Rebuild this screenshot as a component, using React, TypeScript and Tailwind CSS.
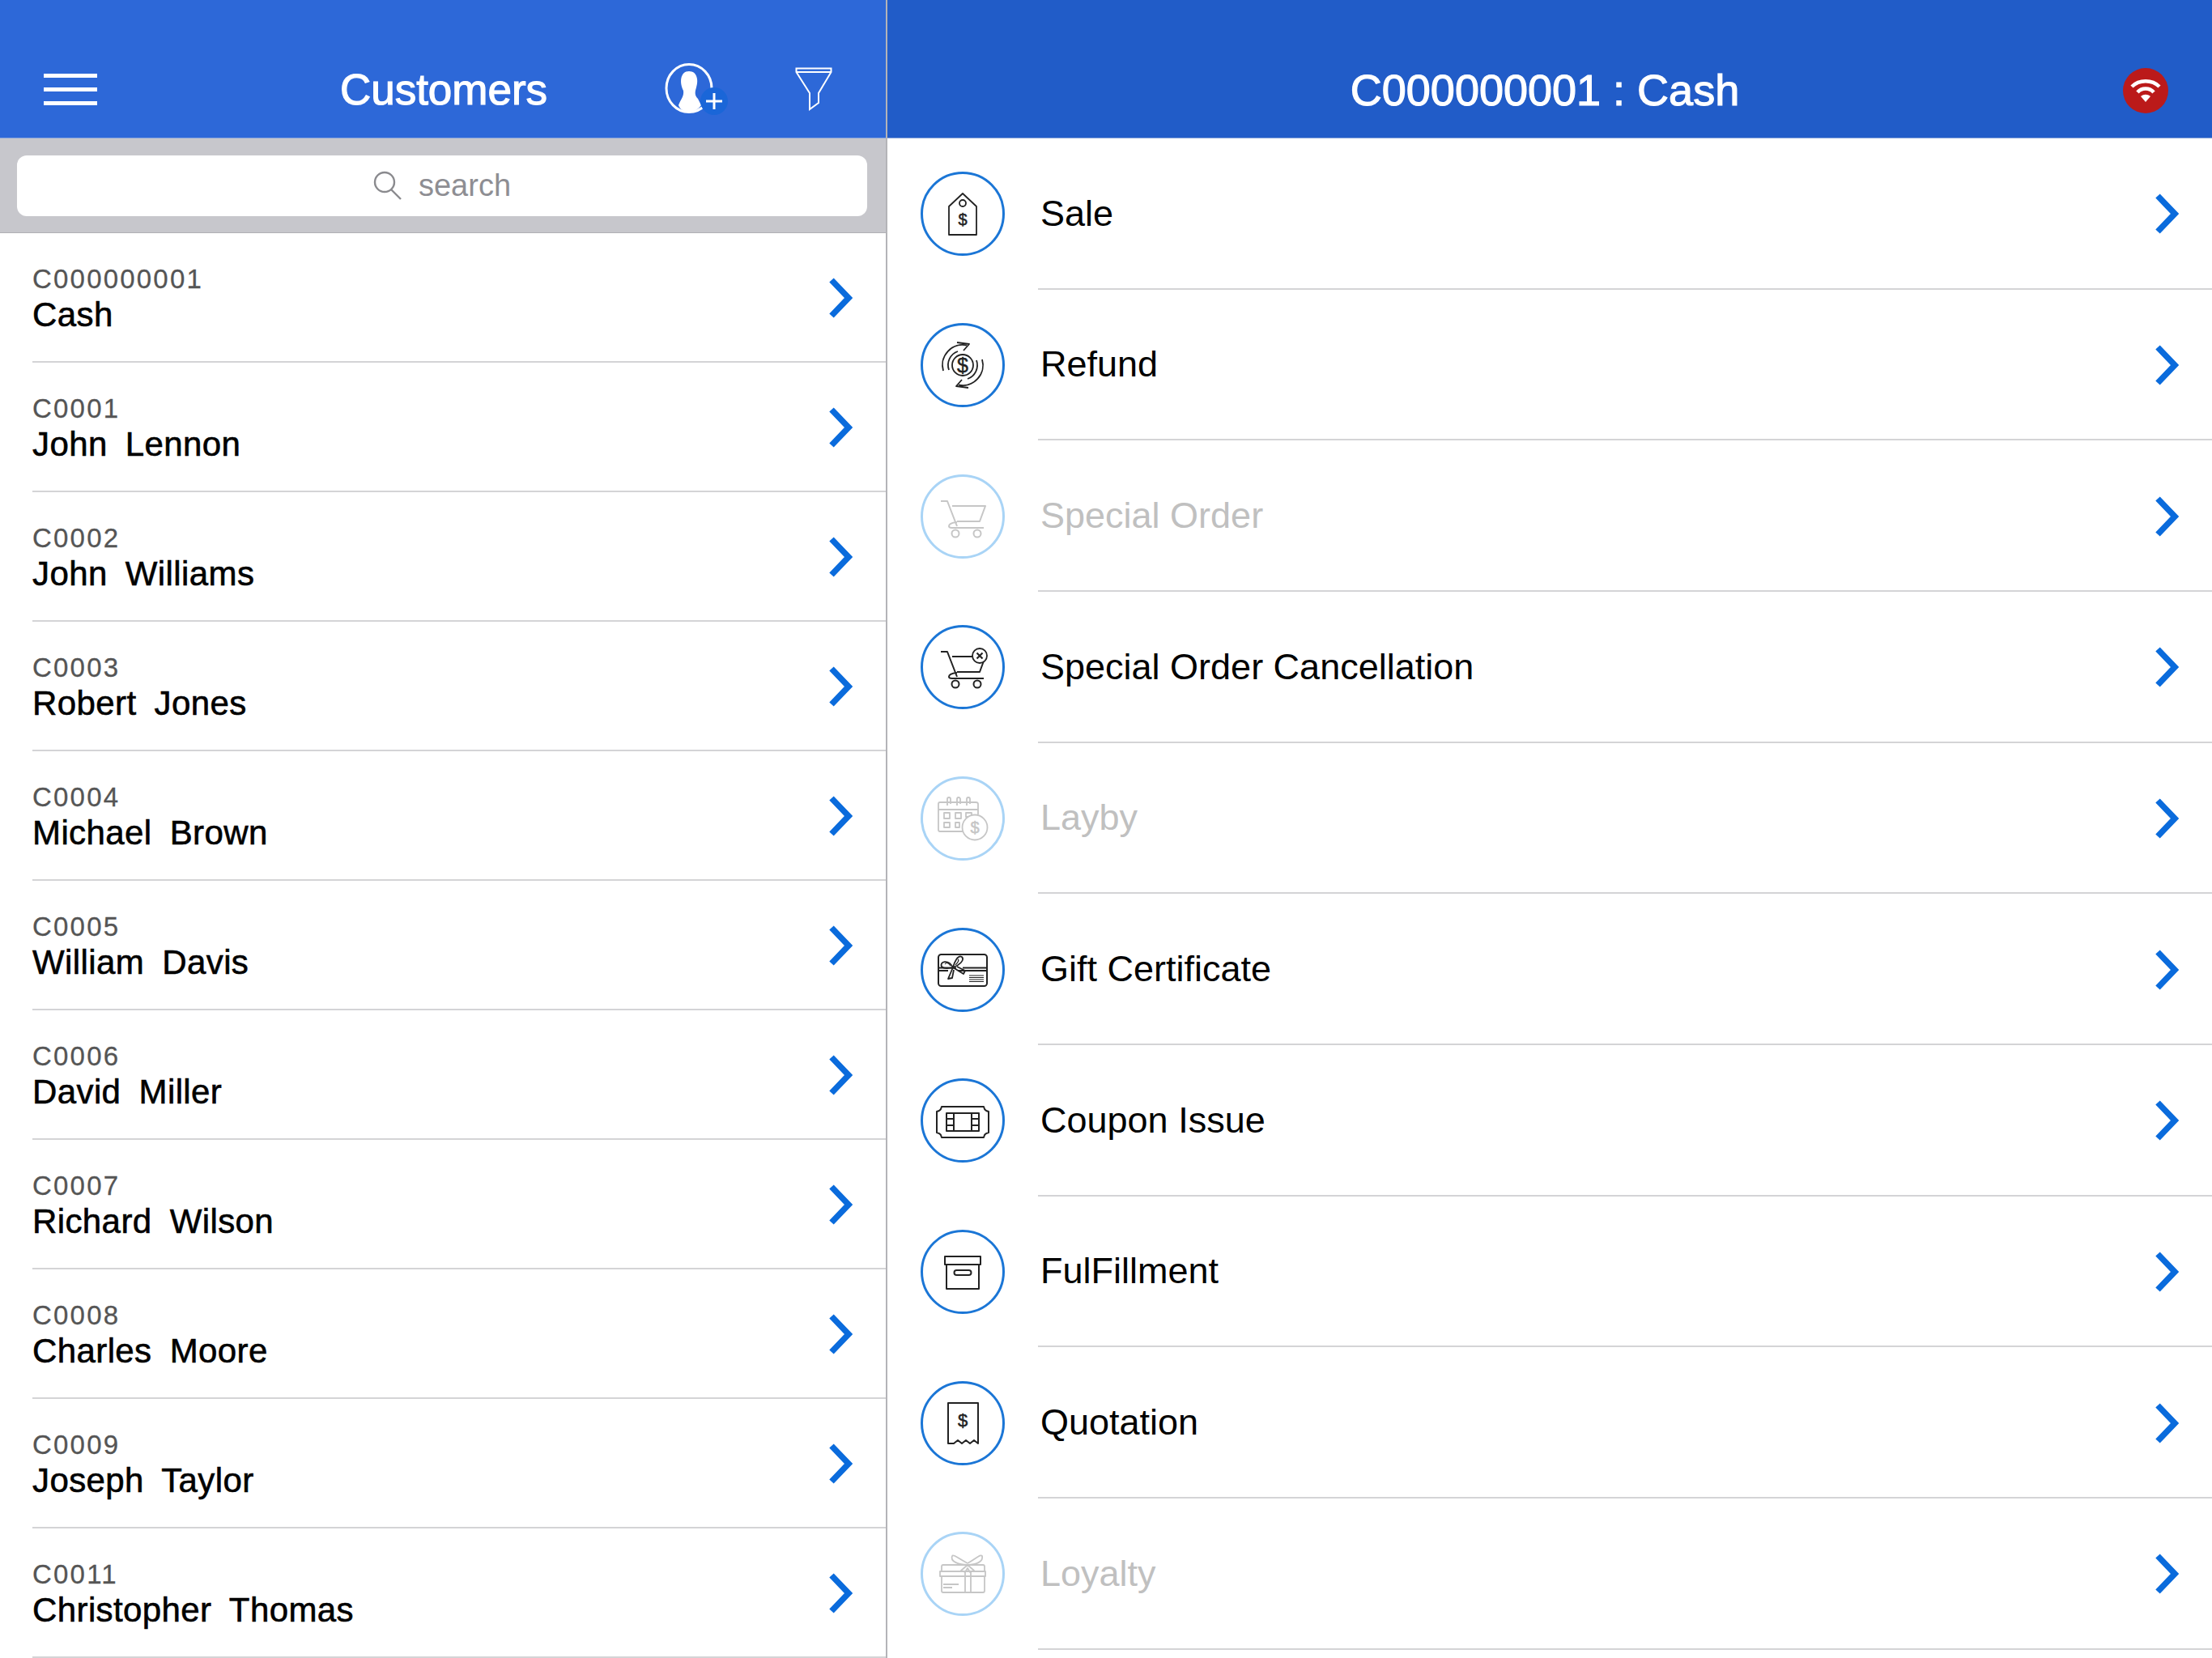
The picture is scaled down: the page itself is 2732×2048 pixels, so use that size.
import React from "react";

const customers: [string, string][] = [
  ["C000000001", "Cash"],
  ["C0001", "John  Lennon"],
  ["C0002", "John  Williams"],
  ["C0003", "Robert  Jones"],
  ["C0004", "Michael  Brown"],
  ["C0005", "William  Davis"],
  ["C0006", "David  Miller"],
  ["C0007", "Richard  Wilson"],
  ["C0008", "Charles  Moore"],
  ["C0009", "Joseph  Taylor"],
  ["C0011", "Christopher  Thomas"],
];

function Chevron() {
  return (
    <svg width="30" height="50" viewBox="0 0 30 50" className="shrink-0 mt-[2px]">
      <path d="M4 3 L25 25 L4 47" fill="none" stroke="#0a6bdc" strokeWidth="7.5" />
    </svg>
  );
}

const Dollar = ({ x, y, size }: { x: number; y: number; size: number }) => (
  <text x={x} y={y} fontSize={size} textAnchor="middle" fontFamily="Liberation Sans, sans-serif" fill="currentColor" stroke="currentColor" strokeWidth="0.5">
    $
  </text>
);

function Glyph({ name }: { name: string }) {
  switch (name) {
    case "Sale":
      return (
        <g>
          <path d="M0 -25 L-17 -9 V26 H17 V-9 Z" />
          <circle cx="0" cy="-13" r="4" />
          <Dollar x={0} y={14} size={20} />
        </g>
      );
    case "Refund":
      return (
        <g>
          <circle cx="0" cy="0" r="13" />
          <path d="M-6 -17 A18 18 0 0 0 -17 6" />
          <path d="M6 17 A18 18 0 0 0 17 -6" />
          <path d="M5 -24.5 A25 25 0 0 0 -24 7 M-5 24.5 A25 25 0 0 0 24 -7" />
          <path d="M-7 -28 L8 -26 L1 -18 M7 28 L-8 26 L-1 18" />
          <Dollar x={0} y={9} size={25} />
        </g>
      );
    case "Cart":
    case "CartX":
      return (
        <g>
          <path d="M-27 -19 H-19 L-7 12 M-13 -13 H28 L21 6 H-7" strokeWidth="2" />
          <path d="M-7 7 Q-17 8 -17 12 Q-17 14 -13 14 H26" strokeWidth="2" />
          <circle cx="-9" cy="21" r="4.5" strokeWidth="2" />
          <circle cx="18" cy="21" r="4.5" strokeWidth="2" />
          {name === "CartX" && (
            <g>
              <circle cx="21" cy="-14" r="9" fill="#fff" />
              <path d="M17.5 -17.5 L24.5 -10.5 M24.5 -17.5 L17.5 -10.5" strokeWidth="2.2" />
            </g>
          )}
        </g>
      );
    case "Layby":
      return (
        <g>
          <path d="M0 16 H-28 Q-30 16 -30 14 V-18 Q-30 -20 -28 -20 H16 Q19 -20 19 -18 V-5" />
          <path d="M-30 -11 H19" />
          <path d="M-19 -16 V-24 a2 2 0 0 1 4 0 V-18 M-7 -16 V-24 a2 2 0 0 1 4 0 V-18 M5 -16 V-24 a2 2 0 0 1 4 0 V-18" />
          <rect x="-23" y="-7" width="7" height="7" />
          <rect x="-9" y="-7" width="7" height="7" />
          <rect x="4" y="-7" width="7" height="5" />
          <rect x="-23" y="5" width="7" height="6" />
          <rect x="-9" y="5" width="5" height="6" />
          <circle cx="15" cy="11" r="15.5" fill="#fff" />
          <Dollar x={15} y={18} size={20} />
        </g>
      );
    case "Gift":
      return (
        <g>
          <rect x="-30" y="-19" width="60" height="39" rx="3.5" strokeWidth="2" />
          <path d="M-30 -2.5 H-8 M0 -2.5 H30 M-30 1 H-18 M-6 1 H30" />
          <path d="M-12 -3 C-18 -14 -29 -10 -26 -4 C-23 -1 -16 -2 -12 -3 C-10 -10 -6 -19 -1 -16 C3 -12 -5 -5 -12 -3 M-12 -3 L-18 11 L-13 10 L-11 0 M-12 -3 L1 5 L3 1 L-7 -4" />
          <path d="M-22 -7 C-20 -10 -17 -8 -15 -5 M-6 -13 C-4 -12 -6 -9 -9 -6" strokeWidth="1.2" />
          <path d="M8 7 H26 M8 9.5 H26 M8 12 H26 M8 14.5 H26" strokeWidth="1" />
        </g>
      );
    case "Coupon":
      return (
        <g strokeWidth="2">
          <path d="M-26 -17 H26 L27 -14 Q28 -12 32 -11 V15 Q28 16 27 18 L26 21 H-26 L-27 18 Q-28 16 -32 15 V-11 Q-28 -12 -27 -14 Z" />
          <rect x="-20" y="-9" width="40" height="22" />
          <path d="M-11 -9 V13 M11 -9 V13 M-20 -2 H-11 M-20 6 H-11 M11 -2 H20 M11 6 H20" />
        </g>
      );
    case "Box":
      return (
        <g strokeWidth="2">
          <rect x="-22" y="-19" width="44" height="10" />
          <rect x="-20" y="-9" width="40" height="30" />
          <rect x="-10.5" y="-2" width="21" height="6" rx="3" />
        </g>
      );
    case "Quote":
      return (
        <g strokeWidth="2">
          <path d="M-18 25 V-25 H19 V25 L14 21 L9 25 L4 21 L-1 25 L-6 21 L-11 25 Z" />
          <Dollar x={0} y={4} size={22} />
        </g>
      );
    case "Gift2":
      return (
        <g>
          <path d="M-26 -3 V-9 Q-26 -11 -24 -11 H25 Q27 -11 27 -9 V-3 M-28 -3 H28 V3 H-28 Z M-26 3 V21 Q-26 23 -24 23 H25 Q27 23 27 21 V3" />
          <path d="M3 3 V23 H10 V3 M3 -3 V3 M10 -3 V3" />
          <path d="M-24 13 H-5 M-24 17 H-13" />
          <path d="M6 -13 C-4 -18 -12 -25 -13 -22 C-16 -15 -4 -11 6 -11 C16 -11 26 -15 24 -22 C22 -25 16 -18 6 -13 M6 -11 L-2 -4 L3 -2 L6 -7 L9 -2 L14 -4 Z" />
        </g>
      );
  }
  return null;
}

function CircleIcon({ name, off }: { name: string; off: boolean }) {
  return (
    <div
      className={`w-[104px] h-[104px] rounded-full border-[3px] flex items-center justify-center shrink-0 ${
        off ? "border-[#a9d4f6] text-[#c6c6c6]" : "border-[#1b76d6] text-[#222222]"
      }`}
    >
      <svg width="80" height="80" viewBox="-40 -40 80 80" fill="none" stroke="currentColor" strokeWidth="1.8" strokeLinejoin="round">
        <Glyph name={name} />
      </svg>
    </div>
  );
}

const actions: { label: string; icon: string; off?: boolean }[] = [
  { label: "Sale", icon: "Sale" },
  { label: "Refund", icon: "Refund" },
  { label: "Special Order", icon: "Cart", off: true },
  { label: "Special Order Cancellation", icon: "CartX" },
  { label: "Layby", icon: "Layby", off: true },
  { label: "Gift Certificate", icon: "Gift" },
  { label: "Coupon Issue", icon: "Coupon" },
  { label: "FulFillment", icon: "Box" },
  { label: "Quotation", icon: "Quote" },
  { label: "Loyalty", icon: "Gift2", off: true },
];

export default function App() {
  return (
    <div className="w-[2732px] h-[2048px] flex bg-white overflow-hidden font-['Liberation_Sans',sans-serif]">
      <div className="w-[1096px] shrink-0 border-r-2 border-[#b4b4b8] flex flex-col">
        <header className="h-[171px] shrink-0 bg-[#2d68d8] border-b border-[#8aa6da] grid grid-cols-[1fr_auto_1fr] items-end pb-[28px] pl-[54px] pr-[66px]">
          <div className="flex flex-col gap-[12px] w-[66px] mb-[12px]">
            <div className="h-[5px] bg-white" />
            <div className="h-[5px] bg-white" />
            <div className="h-[5px] bg-white" />
          </div>
          <div className="text-center text-white text-[53px] leading-[60px] mb-[1px] [-webkit-text-stroke:1.2px_white] mr-[-14px] px-[8px]">
            Customers
          </div>
          <div className="flex items-end justify-end">
            <svg width="84" height="66" viewBox="0 0 84 66" className="mr-[78px] mb-[-2px]">
              <ellipse cx="31" cy="31" rx="28" ry="29.5" fill="none" stroke="white" strokeWidth="3" />
              <path d="M31 10 C41 10 43 21 40 30 C38 36 38 40 42 44 L46 52 C42 58 36 60 31 60 C26 60 20 58 18 52 C21 44 25 41 24 34 C19 24 20 10 31 10 Z" fill="white" />
              <circle cx="62" cy="47" r="17" fill="#1a66d8" />
              <path d="M62 37 V57 M52 47 H72" stroke="white" strokeWidth="3" />
            </svg>
            <svg width="46" height="54" viewBox="0 0 46 54" className="mb-[5px]">
              <path d="M1.5 1.5 H44.5 V6 L29 32 V44 L18 52 V32 L1.5 6 Z M1.5 6 H44.5" fill="none" stroke="white" strokeWidth="2" />
            </svg>
          </div>
        </header>
        <div className="h-[117px] shrink-0 bg-[#c7c7cc] border-b border-[#b0b0b4] pl-[21px] pr-[23px] flex items-center">
          <div className="w-full h-[75px] bg-white rounded-[12px] flex items-center justify-center gap-[20px]">
            <svg width="36" height="36" viewBox="0 0 36 36" fill="none" stroke="#8a8a8e" strokeWidth="2.4">
              <circle cx="14" cy="14" r="12" />
              <path d="M22 23 L34 35" />
            </svg>
            <span className="text-[38px] leading-none text-[#8e8e93]">search</span>
          </div>
        </div>
        <div className="flex-1 flex flex-col">
          {customers.map(([code, name]) => (
            <div key={code} className="h-[160px] shrink-0 pl-[40px] flex flex-col">
              <div className="flex-1 flex items-center border-b-2 border-[#d4d4d6] pr-[41px]">
                <div className="flex-1 flex flex-col">
                  <div className="text-[33px] leading-[40px] mt-[2px] tracking-[2.2px] text-[#555555] [-webkit-text-stroke:0.3px_#555555]">{code}</div>
                  <div className="text-[42px] leading-[46px] mt-[1px] tracking-[0.4px] [word-spacing:-1px] text-black whitespace-pre [-webkit-text-stroke:0.6px_black]">{name}</div>
                </div>
                <Chevron />
              </div>
            </div>
          ))}
        </div>
      </div>
      <div className="flex-1 flex flex-col">
        <header className="h-[171px] shrink-0 bg-[#215cc8] border-b border-[#8aa6da] grid grid-cols-[1fr_auto_1fr] items-end pb-[28px] pr-[54px]">
          <div />
          <div className="text-center text-white text-[54px] leading-[60px] mb-[1px] [-webkit-text-stroke:1.2px_white] ml-[42px]">
            C000000001 : Cash
          </div>
          <div className="flex justify-end">
            <div className="w-[56px] h-[56px] rounded-full bg-[#bb1a1a] flex items-center justify-center mb-[2px]">
              <svg width="38" height="30" viewBox="0 0 38 30" fill="none" stroke="white" strokeWidth="4.5">
                <path d="M2 10 C11 1 27 1 36 10" />
                <path d="M9 17 C14 11 24 11 29 17" />
                <path d="M13 22 L19 29 L25 22 C21 19 17 19 13 22 Z" fill="white" stroke="none" />
              </svg>
            </div>
          </div>
        </header>
        <div className="flex-1 flex flex-col">
          {actions.map((a) => (
            <div key={a.label} className="h-[186.67px] shrink-0 flex items-center pl-[41px]">
              <CircleIcon name={a.icon} off={!!a.off} />
              <div className="flex-1 self-stretch ml-[41px] border-b-2 border-[#d4d4d6] flex items-center pr-[41px]">
                <span className={`flex-1 pl-[3px] text-[45px] leading-none ${a.off ? "text-[#c0c0c0]" : "text-black"}`}>{a.label}</span>
                <Chevron />
              </div>
            </div>
          ))}
        </div>
      </div>
    </div>
  );
}
